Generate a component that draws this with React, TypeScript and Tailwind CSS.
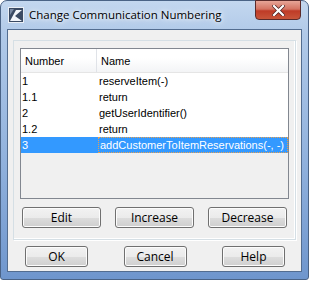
const rows = [
  { num: "1", name: "reserveItem(-)" },
  { num: "1.1", name: "return" },
  { num: "2", name: "getUserIdentifier()" },
  { num: "1.2", name: "return" },
  { num: "3", name: "addCustomerToItemReservations(-, -)", selected: true },
];

const ui = { fontFamily: '"Open Sans", "Noto Sans", sans-serif' };
const tbl = { fontFamily: '"Liberation Sans", Arial, sans-serif' };

function Btn({ label, w }: { label: string; w: string }) {
  return (
    <button
      className={`${w} h-[21px] rounded-[3px] border border-[#707070] bg-[linear-gradient(#f2f2f2_0%,#ebebeb_50%,#dddddd_51%,#cfcfcf_100%)] text-[12px] leading-none text-black shadow-[inset_0_0_0_1px_#fcfcfc]`}
      style={ui}
    >
      {label}
    </button>
  );
}

function AppIcon() {
  return (
    <svg width="16" height="16" viewBox="0 0 16 16">
      <rect x="0" y="0" width="16" height="16" fill="#e9eef5" />
      <rect x="1" y="1" width="14" height="14" fill="#3a4a63" />
      <path d="M2 14 L8 3 L14 3 L7 9 L14 14 Z" fill="#f2f5fa" />
      <path d="M2 2 L6 2 L2 8 Z" fill="#7a8aa3" />
    </svg>
  );
}

export default function App() {
  return (
    <div className="h-[281px] w-[309px] bg-white">
      <div className="relative flex h-[280px] w-[309px] flex-col rounded-t-[7px] rounded-b-[3px] border border-[#4a6386] bg-[linear-gradient(180deg,#c3d7ef_0%,#b0c9e8_12%,#8fb0dc_60%,#6f96cd_100%)] px-[6px] pb-[7px]">
        {/* title bar */}
        <div className="flex h-[28px] items-center gap-[5px] pl-[1px]">
          <AppIcon />
          <span className="text-[11.5px] text-black [text-shadow:0_0_8px_#ffffff,0_0_4px_#ffffff]" style={ui}>
            Change Communication Numbering
          </span>
        </div>
        <div className="absolute right-[7px] top-[-1px] flex h-[20px] w-[46px] items-center justify-center rounded-b-[4px] border border-[#5a2a2a] bg-[linear-gradient(180deg,#e7a597_0%,#d47362_45%,#bf3b27_55%,#c8553a_100%)]">
          <svg width="13" height="11" viewBox="0 0 13 11">
            <path d="M2 1 L11 10 M11 1 L2 10" stroke="#4a2020" strokeWidth="3.6" strokeLinecap="square" />
            <path d="M2 1 L11 10 M11 1 L2 10" stroke="#ffffff" strokeWidth="2.2" strokeLinecap="square" />
          </svg>
        </div>

        {/* client */}
        <div className="flex flex-1 flex-col border border-[#536d90] bg-[#f0f0f0] px-[5px] pt-[10px]">
          <div className="flex h-[200px] flex-col border border-[#d5dfe5] px-[6px] pt-[7px] shadow-[inset_-1px_-1px_0_#ffffff,1px_1px_0_#ffffff]">
            <div className="flex h-[151px] flex-col border border-[#828790] bg-[#f0f0f0]" style={tbl}>
              <div className="flex h-[24px] border-b border-[#e5e5e5] bg-[linear-gradient(180deg,#ffffff_0%,#ffffff_40%,#f3f4f6_100%)] text-[11px] text-black">
                <div className="flex w-[76px] items-center border-r border-[#e0e3e8] pl-[4px] pt-[2px]">Number</div>
                <div className="flex flex-1 items-center pl-[4px] pt-[2px]">Name</div>
              </div>
              <div className="bg-white">
                {rows.map((r) => (
                  <div
                    key={r.num}
                    className={`flex h-[16px] items-center whitespace-nowrap text-[11px] ${r.selected ? "bg-[#3399ff] text-white" : "text-black"}`}
                  >
                    <div className="w-[77px] pl-[1px]">{r.num}</div>
                    <div
                      className={`flex h-full flex-1 items-center pl-[1px] ${r.selected ? "border border-dotted border-[#e8a050] pl-0" : ""}`}
                    >
                      {r.name}
                    </div>
                  </div>
                ))}
              </div>
            </div>
            <div className="mt-[8px] flex justify-between px-[2px]">
              <Btn label="Edit" w="w-[79px]" />
              <Btn label="Increase" w="w-[79px]" />
              <Btn label="Decrease" w="w-[79px]" />
            </div>
          </div>
          <div className="mt-[6px] flex justify-between pl-[12px] pr-[11px]">
            <Btn label="OK" w="w-[63px]" />
            <Btn label="Cancel" w="w-[63px]" />
            <Btn label="Help" w="w-[63px]" />
          </div>
        </div>
      </div>
    </div>
  );
}
